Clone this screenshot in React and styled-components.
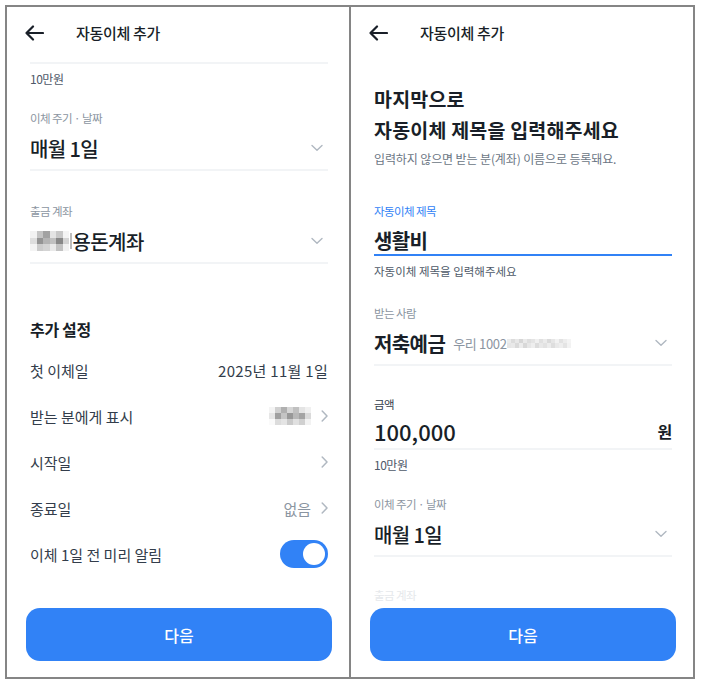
import styled, { createGlobalStyle } from 'styled-components'

// palette
const c = {
  dark: '#191f28',
  text: '#333d4b',
  sub: '#4e5968',
  gray: '#6b7684',
  light: '#8b95a1',
  chev: '#b0b8c1',
  line: '#f2f4f6',
  blue: '#3182f6',
  frame: '#858585',
}

const GlobalStyle = createGlobalStyle`
  body {
    margin: 0;
    background: #ffffff;
    font-family: "Noto Sans CJK KR", "Noto Sans", sans-serif;
    color: ${c.dark};
    letter-spacing: -0.02em;
  }
`

const Frame = styled.div`
  display: flex;
  box-sizing: border-box;
  width: 690px;
  height: 674px;
  margin: 5px 0 0 5px;
  border: 2px solid ${c.frame};
`

const Panel = styled.section`
  flex: 1;
  display: flex;
  flex-direction: column;
  overflow: hidden;
  & + & {
    border-left: 2px solid ${c.frame};
  }
`

const Header = styled.header`
  display: flex;
  align-items: center;
  box-sizing: border-box;
  height: 55px;
  padding: 0 0 4px 17px;
  flex-shrink: 0;
`

const Title = styled.h1`
  margin: 0 0 0 32px;
  font-size: 15px;
  font-weight: 500;
  color: ${c.dark};
`

const Content = styled.div`
  flex: 1;
  overflow: hidden;
  padding: 0 21px 0 23px;
`

const Footer = styled.div`
  padding: 0 17px 16px 19px;
  flex-shrink: 0;
`

const NextButton = styled.button`
  display: block;
  width: 100%;
  height: 53px;
  border: 0;
  border-radius: 14px;
  background: ${c.blue};
  color: #ffffff;
  font-family: inherit;
  font-size: 16px;
  font-weight: 500;
  letter-spacing: 0;
`

const Underline = styled.div`
  height: 2px;
  margin-top: ${(p) => p.$mt || 0}px;
  background: ${(p) => (p.$active ? c.blue : c.line)};
`

const Label = styled.div`
  margin-top: ${(p) => p.$mt || 0}px;
  font-size: 11.5px;
  line-height: 16px;
  letter-spacing: -0.05em;
  color: ${(p) => p.$color || c.light};
`

const Caption = styled.div`
  margin-top: ${(p) => p.$mt || 0}px;
  font-size: ${(p) => p.$size || 12}px;
  line-height: 16px;
  letter-spacing: ${(p) => (p.$size ? '0' : '-0.04em')};
  color: ${c.sub};
`

const ValueRow = styled.div`
  display: flex;
  align-items: center;
  height: ${(p) => p.$h || 30}px;
  margin-top: ${(p) => p.$mt || 7}px;
  padding-right: 5px;
`

const Value = styled.span`
  font-size: ${(p) => p.$size || 20}px;
  font-weight: ${(p) => p.$weight || 500};
  letter-spacing: ${(p) => (p.$num ? '0' : '-0.03em')};
  color: ${c.dark};
  white-space: nowrap;
`

const Hint = styled.span`
  margin-left: 8px;
  font-size: 13px;
  color: ${c.light};
`

const Spacer = styled.span`
  flex: 1;
`

const Unit = styled.span`
  font-size: 16px;
  font-weight: 700;
  color: ${c.dark};
  margin-right: -5px;
`

const Heading = styled.h2`
  margin: 21px 0 0;
  font-size: 19.5px;
  line-height: 31px;
  font-weight: 700;
  letter-spacing: 0.01em;
  color: ${c.dark};
`

const SubText = styled.p`
  margin: 5px 0 0;
  font-size: 12px;
  line-height: 18px;
  color: ${c.gray};
  letter-spacing: -0.01em;
`

const SectionTitle = styled.h3`
  margin: 54px 0 0;
  font-size: 16px;
  line-height: 22px;
  font-weight: 700;
  color: ${c.dark};
`

const SettingList = styled.div`
  margin-top: 7px;
`

const SettingRow = styled.div`
  display: flex;
  align-items: center;
  height: 46px;
  font-size: 15px;
  letter-spacing: 0;
  color: ${c.text};
`

const SettingValue = styled.span`
  display: flex;
  align-items: center;
  gap: 10px;
  margin-left: auto;
  color: ${(p) => (p.$muted ? c.light : c.text)};
  letter-spacing: ${(p) => (p.$num ? '0.02em' : '0')};
`

const Toggle = styled.span`
  display: flex;
  justify-content: flex-end;
  align-items: center;
  box-sizing: border-box;
  width: 48px;
  height: 28px;
  margin-left: auto;
  padding: 3px;
  border-radius: 14px;
  background: ${c.blue};
  &::after {
    content: '';
    width: 22px;
    height: 22px;
    border-radius: 50%;
    background: #ffffff;
  }
`

const MosaicGrid = styled.span`
  display: inline-grid;
  grid-template-columns: repeat(${(p) => p.$cols}, ${(p) => p.$cell}px);
  grid-auto-rows: ${(p) => p.$cellH || p.$cell}px;
  filter: blur(0.6px);
`

const Caret = styled.span`
  width: 1.5px;
  height: 16px;
  margin: 0 1px 0 1px;
  background: #bdbdbd;
`

function Mosaic({ rows, cell, cellH }) {
  return (
    <MosaicGrid $cols={rows[0].length} $cell={cell} $cellH={cellH}>
      {rows.flat().map((g, i) => (
        <span key={i} style={{ background: g }} />
      ))}
    </MosaicGrid>
  )
}

function BackArrow() {
  return (
    <svg width="20" height="16" viewBox="0 0 20 16" fill="none">
      <path d="M19 8H2.5M9 1.5L2.5 8L9 14.5" stroke={c.dark} strokeWidth="2.2" strokeLinecap="round" strokeLinejoin="round" />
    </svg>
  )
}

function ChevronDown() {
  return (
    <svg width="12" height="8" viewBox="0 0 12 8" fill="none" style={{ marginLeft: 'auto' }}>
      <path d="M1 1.5L6 6.2L11 1.5" stroke={c.chev} strokeWidth="1.4" strokeLinecap="round" strokeLinejoin="round" />
    </svg>
  )
}

function ChevronRight() {
  return (
    <svg width="7" height="12" viewBox="0 0 7 12" fill="none">
      <path d="M1.2 1L6 6L1.2 11" stroke={c.chev} strokeWidth="1.5" strokeLinecap="round" strokeLinejoin="round" />
    </svg>
  )
}

const accountMosaic = [
  ['#f2f2f2', '#c4c4c4', '#a2a2a2', '#e4e4e4', '#c8c8c8', '#f4f4f4'],
  ['#dedede', '#949494', '#b4b4b4', '#c0c0c0', '#888888', '#d4d4d4'],
  ['#f4f4f4', '#cccccc', '#d4d4d4', '#e9e9e9', '#c2c2c2', '#f2f2f2'],
]

const nameMosaic = [
  ['#f4f4f4', '#d0d0d0', '#b0b0b0', '#d6d6d6', '#c0c0c0', '#e4e4e4', '#f0f0f0'],
  ['#e6e6e6', '#a0a0a0', '#c4c4c4', '#989898', '#b8b8b8', '#a4a4a4', '#dadada'],
  ['#fafafa', '#dcdcdc', '#e4e4e4', '#cacaca', '#e0e0e0', '#d0d0d0', '#f2f2f2'],
]

const numberMosaic = [
  ['#ececec', '#dcdcdc', '#e8e8e8', '#d6d6d6', '#eaeaea', '#dedede', '#e4e4e4', '#f0f0f0', '#e0e0e0', '#ebebeb', '#dadada', '#e6e6e6', '#f2f2f2', '#e2e2e2', '#ededed', '#f4f4f4'],
  ['#e6e6e6', '#e9e9e9', '#dadada', '#ececec', '#d8d8d8', '#e6e6e6', '#eeeeee', '#dcdcdc', '#e8e8e8', '#e2e2e2', '#ececec', '#dedede', '#e9e9e9', '#eeeeee', '#e4e4e4', '#f2f2f2'],
]

const settings = [
  { label: '첫 이체일', value: '2025년 11월 1일', num: true },
  { label: '받는 분에게 표시', mosaic: true, arrow: true },
  { label: '시작일', arrow: true },
  { label: '종료일', value: '없음', muted: true, arrow: true },
]

function DetailScreen() {
  return (
    <Panel>
      <Header>
        <BackArrow />
        <Title>자동이체 추가</Title>
      </Header>
      <Content>
        <Underline />
        <Caption $mt={7}>10만원</Caption>

        <Label $mt={23}>이체 주기 · 날짜</Label>
        <ValueRow>
          <Value>매월 1일</Value>
          <ChevronDown />
        </ValueRow>
        <Underline $mt={6} />

        <Label $mt={32}>출금 계좌</Label>
        <ValueRow>
          <Mosaic rows={accountMosaic} cell={6.5} />
          <Caret />
          <Value>용돈계좌</Value>
          <ChevronDown />
        </ValueRow>
        <Underline $mt={6} />

        <SectionTitle>추가 설정</SectionTitle>
        <SettingList>
          {settings.map((s) => (
            <SettingRow key={s.label}>
              {s.label}
              <SettingValue $muted={s.muted} $num={s.num}>
                {s.mosaic && <Mosaic rows={nameMosaic} cell={6} />}
                {s.value}
                {s.arrow && <ChevronRight />}
              </SettingValue>
            </SettingRow>
          ))}
          <SettingRow>
            이체 1일 전 미리 알림
            <Toggle />
          </SettingRow>
        </SettingList>
      </Content>
      <Footer>
        <NextButton>다음</NextButton>
      </Footer>
    </Panel>
  )
}

function TitleScreen() {
  return (
    <Panel>
      <Header>
        <BackArrow />
        <Title>자동이체 추가</Title>
      </Header>
      <Content>
        <Heading>
          마지막으로
          <br />
          자동이체 제목을 입력해주세요
        </Heading>
        <SubText>입력하지 않으면 받는 분(계좌) 이름으로 등록돼요.</SubText>

        <Label $mt={35} $color={c.blue}>자동이체 제목</Label>
        <ValueRow $h={28}>
          <Value $weight={600}>생활비</Value>
        </ValueRow>
        <Underline $active />
        <Caption $mt={7} $size={11.5}>자동이체 제목을 입력해주세요</Caption>

        <Label $mt={26}>받는 사람</Label>
        <ValueRow>
          <Value $weight={600}>저축예금</Value>
          <Hint>우리 1002</Hint>
          <Mosaic rows={numberMosaic} cell={4} cellH={4.5} />
          <ChevronDown />
        </ValueRow>
        <Underline $mt={6} />

        <Label $mt={30} $color={c.text}>금액</Label>
        <ValueRow $mt={4}>
          <Value $size={22} $num>100,000</Value>
          <Spacer />
          <Unit>원</Unit>
        </ValueRow>
        <Underline $mt={2} />
        <Caption $mt={7}>10만원</Caption>

        <Label $mt={23}>이체 주기 · 날짜</Label>
        <ValueRow>
          <Value>매월 1일</Value>
          <ChevronDown />
        </ValueRow>
        <Underline $mt={6} />

        <Label $mt={30} $color="#e5e8eb">출금 계좌</Label>
      </Content>
      <Footer>
        <NextButton>다음</NextButton>
      </Footer>
    </Panel>
  )
}

export default function App() {
  return (
    <>
      <GlobalStyle />
      <Frame>
        <DetailScreen />
        <TitleScreen />
      </Frame>
    </>
  )
}
